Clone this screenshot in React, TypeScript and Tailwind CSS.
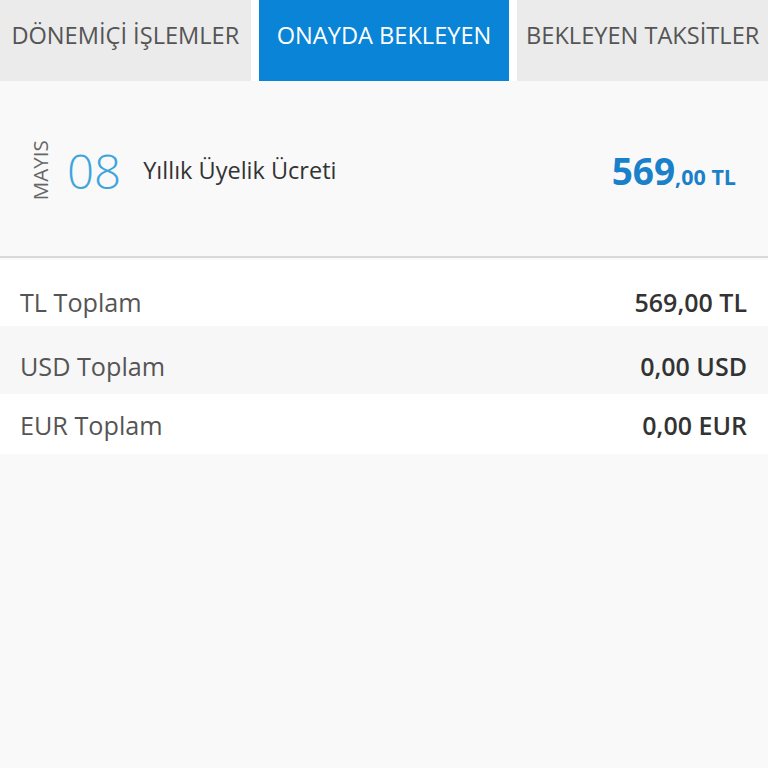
const tabs = [
  { label: 'DÖNEMİÇİ İŞLEMLER', active: false },
  { label: 'ONAYDA BEKLEYEN', active: true },
  { label: 'BEKLEYEN TAKSİTLER', active: false },
]

const totals = [
  { label: 'TL Toplam', value: '569,00 TL', cls: 'h-[66px] bg-white pt-[30px]' },
  { label: 'USD Toplam', value: '0,00 USD', cls: 'h-[68px] bg-[#f7f7f7] pt-[28px]' },
  { label: 'EUR Toplam', value: '0,00 EUR', cls: 'h-[60px] bg-white pt-[19px]' },
]

export default function App() {
  return (
    <div className="min-h-[768px] w-[768px] bg-[#f9f9f9] font-['Open_Sans',sans-serif]">
      <div className="flex h-[81px] gap-[8px] bg-white">
        {tabs.map((t) => (
          <div
            key={t.label}
            className={
              t.active
                ? 'flex flex-1 justify-center bg-[#0a84d6] pt-[18px] text-[23.6px] text-white'
                : 'flex flex-1 justify-center bg-[#ebebeb] pt-[18px] text-[23.6px] text-[#555]'
            }
          >
            {t.label}
          </div>
        ))}
      </div>

      <div className="flex h-[177px] items-center border-b-2 border-[#d9d9d9] pl-[30px] pr-[32px] pt-[4px]">
        <div className="flex w-[20px] justify-center">
          <span className="-rotate-90 whitespace-nowrap text-[20.5px] leading-none text-[#666]">MAYIS</span>
        </div>
        <span className="ml-[17px] text-[47.5px] font-light leading-none text-[#3ea5dc]">08</span>
        <span className="ml-[22px] text-[23.5px] text-[#333]">Yıllık Üyelik Ücreti</span>
        <span className="ml-auto text-[#1a80c9] font-bold">
          <span className="text-[37px]">569</span>
          <span className="text-[21.5px]">,00 TL</span>
        </span>
      </div>

      <div className="mt-[2px]">
        {totals.map((r) => (
          <div key={r.label} className={`flex justify-between pl-[20px] pr-[21px] ${r.cls}`}>
            <span className="text-[25.2px] leading-none text-[#555]">{r.label}</span>
            <span className="text-[25px] font-semibold leading-none text-[#333]">{r.value}</span>
          </div>
        ))}
      </div>
    </div>
  )
}
